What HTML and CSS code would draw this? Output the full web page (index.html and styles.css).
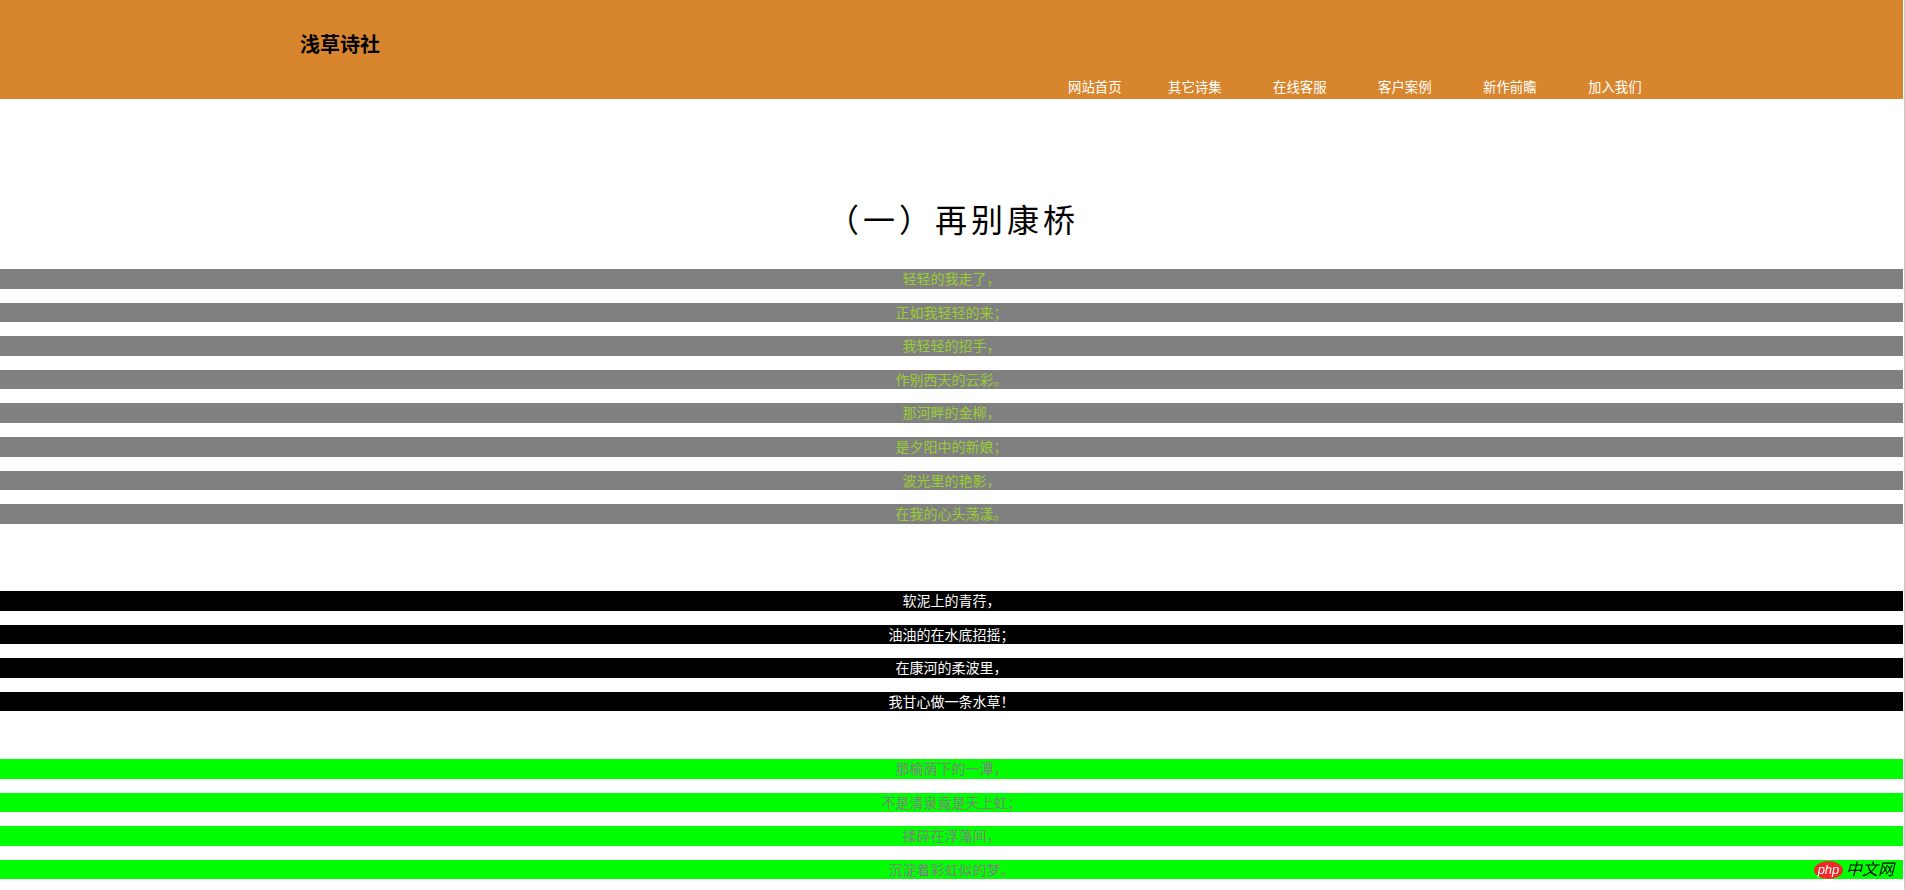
FILE: index.html
```html
<!DOCTYPE html>
<html lang="zh-CN">
<head>
<meta charset="utf-8">
<title>浅草诗社</title>
<link rel="stylesheet" href="styles.css">
</head>
<body>
<div class="page">
	<div class="header">
		<div class="logo">浅草诗社</div>
		<ul class="nav">
			<li><a href="#">网站首页</a></li>
			<li><a href="#">其它诗集</a></li>
			<li><a href="#">在线客服</a></li>
			<li><a href="#">客户案例</a></li>
			<li><a href="#">新作前瞻</a></li>
			<li><a href="#">加入我们</a></li>
		</ul>
	</div>
	<h1 class="title">（一）再别康桥</h1>
	<div class="poem one">
		<p>轻轻的我走了，</p>
		<p>正如我轻轻的来；</p>
		<p>我轻轻的招手，</p>
		<p>作别西天的云彩。</p>
		<p>那河畔的金柳，</p>
		<p>是夕阳中的新娘；</p>
		<p>波光里的艳影，</p>
		<p>在我的心头荡漾。</p>
	</div>
	<br><br>
	<div class="poem two">
		<p>软泥上的青荇，</p>
		<p>油油的在水底招摇；</p>
		<p>在康河的柔波里，</p>
		<p>我甘心做一条水草！</p>
	</div>
	<br>
	<div class="poem three">
		<p>那榆荫下的一潭，</p>
		<p>不是清泉竟是天上虹；</p>
		<p>揉碎在浮藻间，</p>
		<p>沉淀着彩虹似的梦。</p>
	</div>
</div>
<div class="watermark">
	<span class="php">php</span>
	<span class="cn">中文网</span>
</div>
</body>
</html>
```

FILE: styles.css
```css
html { overflow: hidden; height: 100%; }
body {
	margin: 0;
	height: 100%;
	background: #fff;
	font-family: "Liberation Sans", "Noto Sans CJK SC", sans-serif;
	font-size: 14px;
	line-height: 19.6px;
	border-right: 1px solid #c8c8c8;
	box-sizing: border-box;
}
.page { width: 1903px; }

.header {
	height: 99px;
	background: #d8862e;
	display: flex;
	flex-direction: column;
	justify-content: space-between;
}
.logo {
	margin: 31px 0 0 300px;
	font-size: 20px;
	line-height: 28px;
	font-weight: bold;
	color: #000;
}
.nav {
	list-style: none;
	margin: 0 0 1px 1068px;
	padding: 0;
	display: flex;
	font-size: 13.4px;
}
.nav li { width: 105px; }
.nav li:first-child { width: 100px; }
.nav a { color: #fff; text-decoration: none; }

.title {
	margin: 102px 0 28px;
	padding-left: 3px;
	text-align: center;
	font-size: 32px;
	line-height: 40px;
	font-weight: normal;
	letter-spacing: 4px;
	color: #000;
}

.poem p {
	margin: 14px 0;
	padding-top: 1px;
	line-height: 18.6px;
	text-align: center;
}
.one p { background: #808080; color: #9acd32; }
.two p { background: #000; color: #fff; }
.three p { background: #0f0; color: #808080; }

.watermark {
	position: fixed;
	right: 11px;
	bottom: 11px;
	display: flex;
	align-items: center;
	gap: 3px;
}
.php {
	width: 29px;
	height: 18px;
	border-radius: 50%;
	background: #ee2a2a;
	color: #fff;
	font: italic 13px/17px "Liberation Sans", sans-serif;
	text-align: center;
}
.cn {
	color: #000;
	font-size: 16px;
	line-height: 18px;
	font-style: italic;
}
```
